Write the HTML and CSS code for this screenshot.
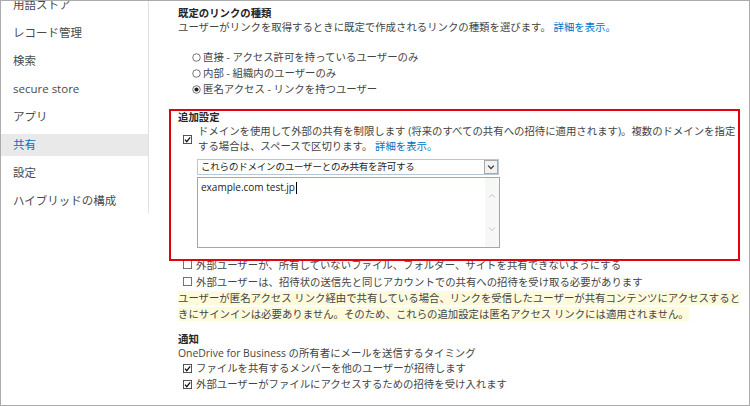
FILE: index.html
```html
<!DOCTYPE html>
<html lang="ja">
<head>
    <meta charset="UTF-8">
    <meta name="viewport" content="width=device-width, initial-scale=1.0">
    <title>共有の設定</title>
    <link rel="stylesheet" href="styles.css">
</head>
<body>
    <div class="frame">
        <nav class="side-nav">
            <a class="nav-item">用語ストア</a>
            <a class="nav-item">レコード管理</a>
            <a class="nav-item">検索</a>
            <a class="nav-item">secure store</a>
            <a class="nav-item">アプリ</a>
            <a class="nav-item active">共有</a>
            <a class="nav-item">設定</a>
            <a class="nav-item">ハイブリッドの構成</a>
        </nav>

        <main class="content">
            <!-- 既定のリンクの種類 -->
            <section class="group">
                <h2 class="group-title">既定のリンクの種類</h2>
                <p class="group-desc">ユーザーがリンクを取得するときに既定で作成されるリンクの種類を選びます。 <a class="link">詳細を表示。</a></p>
                <ul class="option-list">
                    <li class="option">
                        <svg class="radio" viewBox="0 0 10 10"><circle cx="5" cy="5" r="4.2" fill="#fff" stroke="#555" stroke-width="0.9"/></svg>
                        直接 - アクセス許可を持っているユーザーのみ
                    </li>
                    <li class="option">
                        <svg class="radio" viewBox="0 0 10 10"><circle cx="5" cy="5" r="4.2" fill="#fff" stroke="#555" stroke-width="0.9"/></svg>
                        内部 - 組織内のユーザーのみ
                    </li>
                    <li class="option">
                        <svg class="radio" viewBox="0 0 10 10"><circle cx="5" cy="5" r="4.2" fill="#fff" stroke="#555" stroke-width="0.9"/><circle cx="5" cy="5" r="2.3" fill="#222"/></svg>
                        匿名アクセス - リンクを持つユーザー
                    </li>
                </ul>
            </section>

            <!-- 追加設定 -->
            <section class="group extra">
                <div class="highlight-box"></div>
                <h2 class="group-title">追加設定</h2>
                <div class="check-block">
                    <svg class="checkbox" viewBox="0 0 10 10"><rect x="0.5" y="0.5" width="9" height="9" fill="#fff" stroke="#444"/><path d="M2.2 5.2 L4.2 7.4 L8 2.6" fill="none" stroke="#111" stroke-width="1.4"/></svg>
                    <p class="check-text">ドメインを使用して外部の共有を制限します (将来のすべての共有への招待に適用されます)。複数のドメインを指定<br>する場合は、スペースで区切ります。 <a class="link">詳細を表示。</a></p>
                </div>
                <div class="domain-fields">
                    <div class="select-box">
                        <span class="select-text">これらのドメインのユーザーとのみ共有を許可する</span>
                        <span class="select-btn">
                            <svg viewBox="0 0 10 10"><path d="M2.2 3.6 L5 6.6 L7.8 3.6" fill="none" stroke="#333" stroke-width="1.3"/></svg>
                        </span>
                    </div>
                    <div class="text-box">
                        <span class="text-value">example.com test.jp<span class="caret"></span></span>
                        <span class="scroll-track">
                            <svg viewBox="0 0 10 10"><path d="M2 6.5 L5 3.5 L8 6.5" fill="none" stroke="#c4c4c4" stroke-width="1"/></svg>
                            <svg viewBox="0 0 10 10"><path d="M2 3.5 L5 6.5 L8 3.5" fill="none" stroke="#c4c4c4" stroke-width="1"/></svg>
                        </span>
                    </div>
                </div>
                <div class="check-row first">
                    <svg class="checkbox" viewBox="0 0 10 10"><rect x="0.5" y="0.5" width="9" height="9" fill="#fff" stroke="#666"/></svg>
                    外部ユーザーが、所有していないファイル、フォルダー、サイトを共有できないようにする
                </div>
                <div class="check-row">
                    <svg class="checkbox" viewBox="0 0 10 10"><rect x="0.5" y="0.5" width="9" height="9" fill="#fff" stroke="#666"/></svg>
                    外部ユーザーは、招待状の送信先と同じアカウントでの共有への招待を受け取る必要があります
                </div>
                <p class="note"><span>ユーザーが匿名アクセス リンク経由で共有している場合、リンクを受信したユーザーが共有コンテンツにアクセスすると<br>きにサインインは必要ありません。そのため、これらの追加設定は匿名アクセス リンクには適用されません。</span></p>
            </section>

            <!-- 通知 -->
            <section class="group notify">
                <h2 class="group-title">通知</h2>
                <p class="group-desc">OneDrive for Business の所有者にメールを送信するタイミング</p>
                <div class="check-row small">
                    <svg class="checkbox" viewBox="0 0 10 10"><rect x="0.5" y="0.5" width="9" height="9" fill="#fff" stroke="#444"/><path d="M2.2 5.2 L4.2 7.4 L8 2.6" fill="none" stroke="#111" stroke-width="1.4"/></svg>
                    ファイルを共有するメンバーを他のユーザーが招待します
                </div>
                <div class="check-row small">
                    <svg class="checkbox" viewBox="0 0 10 10"><rect x="0.5" y="0.5" width="9" height="9" fill="#fff" stroke="#444"/><path d="M2.2 5.2 L4.2 7.4 L8 2.6" fill="none" stroke="#111" stroke-width="1.4"/></svg>
                    外部ユーザーがファイルにアクセスするための招待を受け入れます
                </div>
            </section>
        </main>
    </div>
</body>
</html>
```

FILE: styles.css
```css
:root {
    --text-color: #444;
    --title-color: #262626;
    --link-color: #0072c6;
    --nav-active-bg: #e9e9ea;
    --note-bg: #fefbdc;
    --annotation: #e3000f;
}

* {
    box-sizing: border-box;
    margin: 0;
    padding: 0;
}

body {
    font-family: "Open Sans", "Noto Sans CJK JP", sans-serif;
    color: var(--text-color);
    background: #fff;
}

.frame {
    width: 750px;
    height: 406px;
    border: 1px solid #ababab;
    display: flex;
    align-items: flex-start;
    overflow: hidden;
}

/* left navigation */
.side-nav {
    width: 148px;
    flex: none;
    display: flex;
    flex-direction: column;
    gap: 6px;
    margin-top: -7px;
    padding-bottom: 1px;
    border-right: 1px solid #e1e1e1;
}

.nav-item {
    display: block;
    height: 22px;
    line-height: 22px;
    padding-left: 12px;
    font-size: 11.5px;
    color: #4a4a4a;
    white-space: nowrap;
}

.nav-item.active {
    background: var(--nav-active-bg);
    color: var(--link-color);
}

/* main settings area */
.content {
    flex: 1;
    padding: 5px 0 0 29px;
    font-size: 10.4px;
    line-height: 14px;
}

.group-title {
    font-size: 10.4px;
    font-weight: bold;
    line-height: 14px;
    color: var(--title-color);
}

.group-desc {
    white-space: nowrap;
}

.link {
    color: var(--link-color);
}

.option-list {
    list-style: none;
    margin-top: 15px;
    padding-left: 14px;
}

.option {
    display: flex;
    align-items: center;
    height: 16px;
    white-space: nowrap;
}

.radio {
    width: 9px;
    height: 9px;
    margin-right: 2px;
    flex: none;
}

.checkbox {
    width: 9px;
    height: 9px;
    flex: none;
}

/* additional settings */
.extra {
    position: relative;
    margin-top: 13px;
}

.highlight-box {
    position: absolute;
    left: -9px;
    top: -1px;
    width: 571px;
    height: 152px;
    border: 2px solid var(--annotation);
    pointer-events: none;
    z-index: 2;
}

.check-block {
    display: flex;
    align-items: center;
    margin-left: 5px;
}

.check-text {
    margin-left: 6px;
    line-height: 15px;
    white-space: nowrap;
}

.domain-fields {
    margin: 5px 0 0 19px;
}

.select-box {
    display: flex;
    justify-content: space-between;
    align-items: center;
    width: 302px;
    height: 16px;
    border: 1px solid #b9c6d4;
}

.select-text {
    padding-left: 3px;
    font-size: 9.5px;
    line-height: 14px;
    letter-spacing: -0.2px;
    color: #222;
    white-space: nowrap;
}

.select-btn {
    display: flex;
    align-items: center;
    justify-content: center;
    width: 14px;
    height: 14px;
    background: #f2f2f2;
    border: 1px solid #a9a9a9;
}

.select-btn svg {
    width: 10px;
    height: 10px;
}

.text-box {
    display: flex;
    justify-content: space-between;
    width: 303px;
    height: 71px;
    margin-top: 2px;
    border: 1px solid #97aabd;
}

.text-value {
    padding: 2px 0 0 3px;
    font-size: 10px;
    color: #222;
    line-height: 14px;
    white-space: nowrap;
}

.caret {
    display: inline-block;
    width: 1px;
    height: 12px;
    margin-left: 1px;
    vertical-align: -3px;
    background: #000;
}

.scroll-track {
    display: flex;
    flex-direction: column;
    justify-content: space-between;
    align-items: center;
    width: 14px;
    padding: 13px 0;
    background: #f7f7f7;
}

.scroll-track svg {
    width: 10px;
    height: 10px;
}

.check-row {
    display: flex;
    align-items: center;
    gap: 4px;
    height: 17px;
    margin-left: 5px;
    white-space: nowrap;
}

.check-row.first {
    margin-top: 8px;
}

.check-row.small {
    height: 16px;
}

.note {
    line-height: 16px;
    white-space: nowrap;
}

.note span {
    background: var(--note-bg);
}

.notify {
    margin-top: 10px;
}
```
